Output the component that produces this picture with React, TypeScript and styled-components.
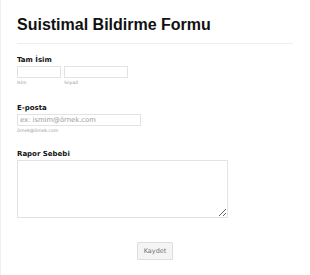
import React from 'react';
import styled, { createGlobalStyle } from 'styled-components';

const GlobalStyle = createGlobalStyle`
  html, body {
    margin: 0;
    padding: 0;
    background: #ffffff;
  }
  body {
    font-family: "DejaVu Sans", Verdana, sans-serif;
  }
`;

const Page = styled.div`
  width: 310px;
  height: 275px;
  box-sizing: border-box;
  border-left: 1px solid #f0f0f0;
  padding: 15px 17px 0 16px;
  display: flex;
  flex-direction: column;
`;

const Title = styled.h1`
  margin: 0;
  font-family: "Liberation Sans", Arial, sans-serif;
  font-size: 16px;
  line-height: 20px;
  font-weight: bold;
  color: #111;
`;

const Divider = styled.div`
  height: 1px;
  background: #eeeeee;
  margin-top: 8px;
`;

const Field = styled.div<{ $top: number }>`
  display: flex;
  flex-direction: column;
  margin-top: ${(p) => p.$top}px;
`;

const Label = styled.div`
  font-size: 7px;
  line-height: 10px;
  font-weight: bold;
  color: #111;
  margin-bottom: 1px;
`;

const Row = styled.div`
  display: flex;
  gap: 3px;
`;

const Part = styled.div`
  display: flex;
  flex-direction: column;
`;

const Input = styled.input<{ $w: number }>`
  box-sizing: border-box;
  width: ${(p) => p.$w}px;
  height: 12px;
  margin: 0;
  padding: 0 2px;
  border: 1px solid #e3e3e3;
  background: #fff;
  font-family: "DejaVu Sans", Verdana, sans-serif;
  font-size: 6.8px;
  outline: none;
  &::placeholder {
    color: #9a9a9a;
  }
`;

const Sub = styled.span`
  font-size: 4.5px;
  line-height: 7px;
  color: #999;
  margin-top: 1px;
`;

const TextArea = styled.textarea`
  box-sizing: border-box;
  width: 211px;
  height: 58px;
  margin: 0;
  border: 1px solid #e3e3e3;
  resize: both;
  font-family: "DejaVu Sans", Verdana, sans-serif;
  font-size: 7px;
  outline: none;
  display: block;
`;

const Actions = styled.div`
  display: flex;
  justify-content: center;
  margin-top: 24px;
`;

const Button = styled.button`
  width: 36px;
  height: 18px;
  padding: 0;
  border: 1px solid #dedede;
  border-radius: 1px;
  background: #f4f4f4;
  color: #777;
  font-family: "DejaVu Sans", Verdana, sans-serif;
  font-size: 6.5px;
`;

export default function App() {
  return (
    <>
      <GlobalStyle />
      <Page>
        <Title>Suistimal Bildirme Formu</Title>
        <Divider />
        <Field $top={11}>
          <Label>Tam İsim</Label>
          <Row>
            <Part>
              <Input $w={44} />
              <Sub>İsim</Sub>
            </Part>
            <Part>
              <Input $w={64} />
              <Sub>Soyad</Sub>
            </Part>
          </Row>
        </Field>
        <Field $top={17}>
          <Label>E-posta</Label>
          <Input $w={124} placeholder="ex: ismim@örnek.com" />
          <Sub>örnek@örnek.com</Sub>
        </Field>
        <Field $top={15}>
          <Label>Rapor Sebebi</Label>
          <TextArea />
        </Field>
        <Actions>
          <Button>Kaydet</Button>
        </Actions>
      </Page>
    </>
  );
}
